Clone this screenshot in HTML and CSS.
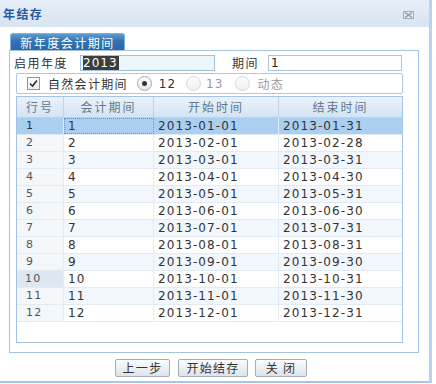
FILE: index.html
```html
<!DOCTYPE html>
<html lang="zh">
<head>
    <meta charset="UTF-8">
    <title>年结存</title>
    <link rel="stylesheet" href="styles.css">
</head>
<body>
    <div class="window">
        <div class="titlebar">
            <span class="title">年结存</span>
            <span class="close-tool">
                <svg width="11" height="8" viewBox="0 0 11 8">
                    <rect x="0.5" y="0.5" width="10" height="7" fill="none" stroke="#a3adb8"/>
                    <path d="M2 1.5 L9 6.5 M9 1.5 L2 6.5" stroke="#8d98a4" stroke-width="1.2"/>
                </svg>
            </span>
        </div>

        <div class="window-body">
            <div class="tab-strip">
                <span class="tab">新年度会计期间</span>
            </div>

            <div class="tab-panel">
                <div class="form-row">
                    <span class="field-label">启用年度</span>
                    <div class="text-field focused"><span class="selection">2013</span></div>
                    <span class="field-label period">期间</span>
                    <div class="text-field period-field">1</div>
                </div>

                <div class="option-box">
                    <span class="checkbox">
                        <svg width="11" height="11" viewBox="0 0 11 11">
                            <path d="M2 5.5 L4.5 8 L9 2.5" fill="none" stroke="#2b2b2b" stroke-width="1.6"/>
                        </svg>
                    </span>
                    <span class="opt-label natural">自然会计期间</span>
                    <span class="radio checked"></span>
                    <span class="opt-label num">12</span>
                    <span class="radio disabled"></span>
                    <span class="opt-label num disabled-text">13</span>
                    <span class="radio disabled"></span>
                    <span class="opt-label disabled-text">动态</span>
                </div>

                <div class="grid">
                    <div class="grid-row grid-header">
                        <div class="cell">行号</div>
                        <div class="cell">会计期间</div>
                        <div class="cell">开始时间</div>
                        <div class="cell">结束时间</div>
                    </div>
                    <div class="grid-row selected">
                        <div class="cell rownum">1</div>
                        <div class="cell focus-cell">1</div>
                        <div class="cell">2013-01-01</div>
                        <div class="cell">2013-01-31</div>
                    </div>
                    <div class="grid-row">
                        <div class="cell rownum">2</div>
                        <div class="cell">2</div>
                        <div class="cell">2013-02-01</div>
                        <div class="cell">2013-02-28</div>
                    </div>
                    <div class="grid-row alt">
                        <div class="cell rownum">3</div>
                        <div class="cell">3</div>
                        <div class="cell">2013-03-01</div>
                        <div class="cell">2013-03-31</div>
                    </div>
                    <div class="grid-row">
                        <div class="cell rownum">4</div>
                        <div class="cell">4</div>
                        <div class="cell">2013-04-01</div>
                        <div class="cell">2013-04-30</div>
                    </div>
                    <div class="grid-row alt">
                        <div class="cell rownum">5</div>
                        <div class="cell">5</div>
                        <div class="cell">2013-05-01</div>
                        <div class="cell">2013-05-31</div>
                    </div>
                    <div class="grid-row">
                        <div class="cell rownum">6</div>
                        <div class="cell">6</div>
                        <div class="cell">2013-06-01</div>
                        <div class="cell">2013-06-30</div>
                    </div>
                    <div class="grid-row alt">
                        <div class="cell rownum">7</div>
                        <div class="cell">7</div>
                        <div class="cell">2013-07-01</div>
                        <div class="cell">2013-07-31</div>
                    </div>
                    <div class="grid-row">
                        <div class="cell rownum">8</div>
                        <div class="cell">8</div>
                        <div class="cell">2013-08-01</div>
                        <div class="cell">2013-08-31</div>
                    </div>
                    <div class="grid-row alt">
                        <div class="cell rownum">9</div>
                        <div class="cell">9</div>
                        <div class="cell">2013-09-01</div>
                        <div class="cell">2013-09-30</div>
                    </div>
                    <div class="grid-row">
                        <div class="cell rownum hover">10</div>
                        <div class="cell">10</div>
                        <div class="cell">2013-10-01</div>
                        <div class="cell">2013-10-31</div>
                    </div>
                    <div class="grid-row alt">
                        <div class="cell rownum">11</div>
                        <div class="cell">11</div>
                        <div class="cell">2013-11-01</div>
                        <div class="cell">2013-11-30</div>
                    </div>
                    <div class="grid-row">
                        <div class="cell rownum">12</div>
                        <div class="cell">12</div>
                        <div class="cell">2013-12-01</div>
                        <div class="cell">2013-12-31</div>
                    </div>
                </div>
            </div>

            <div class="buttons">
                <button class="btn btn-prev">上一步</button>
                <button class="btn btn-start">开始结存</button>
                <button class="btn btn-close">关 闭</button>
            </div>
        </div>
    </div>
</body>
</html>
```

FILE: styles.css
```css
* {
    box-sizing: border-box;
}

body {
    margin: 0;
    background-color: #fff;
    font-family: 'DejaVu Sans', 'Noto Sans CJK SC', sans-serif;
    font-size: 12px;
    color: #333;
}

.window {
    width: 432px;
    height: 383px;
    display: flex;
    flex-direction: column;
    border-right: 3px solid #b9d3ee;
    border-bottom: 2px solid #aac5e3;
}

.titlebar {
    height: 27px;
    display: flex;
    align-items: center;
    justify-content: space-between;
    padding: 0 15px 0 3px;
    background: linear-gradient(#e7eef8, #d8e4f2);
}

.title {
    font-family: 'Noto Sans CJK SC', sans-serif;
    font-weight: bold;
    font-size: 12px;
    letter-spacing: 1.4px;
    color: #2458a0;
}

.close-tool {
    display: flex;
    margin-top: 2px;
}

.window-body {
    flex: 1;
    padding: 6px 0 0 9px;
}

.tab-strip {
    display: flex;
    height: 17px;
    padding-left: 1px;
}

.tab {
    width: 115px;
    height: 17px;
    display: flex;
    align-items: center;
    justify-content: center;
    border: 1px solid #7fb0de;
    border-bottom: none;
    border-radius: 3px 3px 0 0;
    background: linear-gradient(#5f9bd2, #3173b3 45%, #2a67a6);
    color: #fff;
    font-family: 'Noto Sans CJK SC', sans-serif;
    font-size: 12px;
    letter-spacing: 1.5px;
}

.tab-panel {
    width: 410px;
    height: 303px;
    border: 1px solid #a3c2e4;
    padding: 4px 0 0 4px;
}

.form-row {
    display: flex;
    align-items: center;
    height: 16px;
}

.field-label {
    width: 66px;
    font-family: 'Noto Sans CJK SC', sans-serif;
    letter-spacing: 1.5px;
    line-height: 16px;
}

.field-label.period {
    width: 36px;
    margin-left: 17px;
}

.text-field {
    width: 135px;
    height: 16px;
    border: 1px solid #a6c6e2;
    background-color: #fff;
    padding: 0 2px;
    line-height: 14px;
    letter-spacing: 1px;
    color: #222;
}

.text-field.focused {
    background-color: #ecf6fd;
    border-color: #9dc2e2;
}

.text-field.period-field {
    width: 134px;
}

.selection {
    display: inline-block;
    background-color: #3d3d3d;
    color: #fff;
    padding-right: 1px;
}

.option-box {
    display: flex;
    align-items: center;
    width: 387px;
    height: 21px;
    margin: 2px 0 0 2px;
    padding-left: 10px;
    border: 1px solid #aec8e3;
    border-radius: 2px;
}

.checkbox {
    width: 13px;
    height: 13px;
    display: flex;
    align-items: center;
    justify-content: center;
    border: 1px solid #8597aa;
    background: linear-gradient(#fff, #eef1f4);
}

.opt-label {
    font-family: 'Noto Sans CJK SC', sans-serif;
    letter-spacing: 1.3px;
    line-height: 16px;
}

.opt-label.natural {
    margin-left: 8px;
}

.opt-label.num {
    font-family: 'DejaVu Sans', sans-serif;
    letter-spacing: 1px;
    margin-left: 7px;
}

.disabled-text {
    color: #9a9a9a;
}

.radio {
    width: 15px;
    height: 15px;
    border-radius: 50%;
    display: flex;
    align-items: center;
    justify-content: center;
    margin-left: 9px;
}

.radio.checked {
    border: 1px solid #9aa7b5;
    background: linear-gradient(#fff, #e3e8ee);
}

.radio.checked::after {
    content: '';
    width: 5px;
    height: 5px;
    border-radius: 50%;
    background-color: #333;
}

.radio.disabled {
    border: 1px solid #d2d9e0;
    background: linear-gradient(#fbfcfd, #eef1f4);
}

.radio.disabled + .num {
    margin-left: 5px;
}

.num + .radio {
    margin-left: 10px;
}

.disabled-text + .radio {
    margin-left: 12px;
}

.radio.disabled + .disabled-text:not(.num) {
    margin-left: 7px;
}

.grid {
    width: 387px;
    height: 247px;
    margin: 2px 0 0 2px;
    border: 1px solid #a3c2e4;
    background-color: #fff;
}

.grid-row {
    display: grid;
    grid-template-columns: 47px 90px 125px 123px;
    height: 17px;
    border-bottom: 1px solid #e1ebf6;
}

.cell {
    padding-left: 4px;
    border-right: 1px solid #e2ecf7;
    line-height: 16px;
    letter-spacing: 1.1px;
    color: #333;
    white-space: nowrap;
}

.cell:last-child {
    border-right: none;
}

.grid-header {
    height: 21px;
    border-bottom: 1px solid #b9d1ea;
    background: linear-gradient(#eaf2fb, #d3e4f4);
}

.grid-header .cell {
    padding-left: 0;
    text-align: center;
    line-height: 20px;
    font-family: 'Noto Sans CJK SC', sans-serif;
    letter-spacing: 2px;
    color: #627890;
    border-right: 1px solid #bcd3ea;
}

.grid-header .cell:last-child {
    border-right: none;
}

.grid-row.alt {
    background-color: #f1f7fd;
}

.rownum {
    padding-left: 9px;
    font-size: 11px;
    letter-spacing: 1.3px;
    color: #555;
    background-color: #f4f7fa;
}

.rownum.hover {
    padding-left: 8px;
    background-color: #dce8f0;
}

.grid-row.selected {
    background-color: #abcff0;
}

.grid-row.selected .rownum {
    background-color: #abcff0;
    color: #333;
}

.focus-cell {
    border: 1px dotted #5c9ad4;
    padding-left: 3px;
    line-height: 14px;
}

.buttons {
    display: flex;
    justify-content: center;
    gap: 8px;
    margin-top: 6px;
    padding-right: 16px;
}

.btn {
    height: 18px;
    padding: 0;
    border: 1px solid #a2adb9;
    border-radius: 2px;
    background: linear-gradient(#fbfcfd, #dde3ea);
    font-family: 'Noto Sans CJK SC', sans-serif;
    font-size: 12px;
    letter-spacing: 1.3px;
    line-height: 16px;
    color: #333;
}

.btn-prev {
    width: 55px;
}

.btn-start {
    width: 70px;
}

.btn-close {
    width: 52px;
    margin-left: -1px;
}
```
